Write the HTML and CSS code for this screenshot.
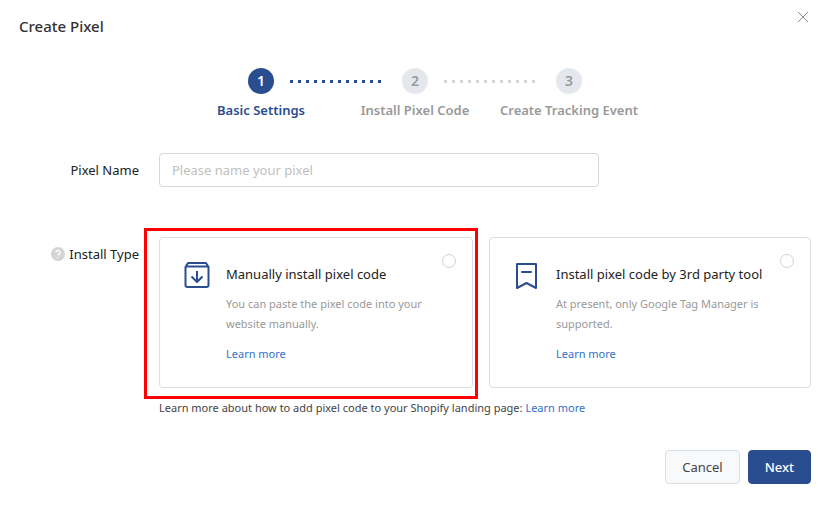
FILE: index.html
```html
<!DOCTYPE html>
<html lang="en">
<head>
<meta charset="utf-8">
<title>Create Pixel</title>
<link rel="stylesheet" href="styles.css">
</head>
<body>
<main class="dialog">
  <header class="header">
    <h1 class="title">Create Pixel</h1>
    <button class="close" type="button" aria-label="Close">
      <svg width="12" height="12" viewBox="0 0 12 12" fill="none" stroke="currentColor"><path d="M1 1l10 10M11 1L1 11"/></svg>
    </button>
  </header>

  <ol class="steps">
    <li class="step active">
      <div class="marker"><span class="dots hidden"></span><span class="number">1</span><span class="dots"></span></div>
      <span class="step-name">Basic Settings</span>
    </li>
    <li class="step">
      <div class="marker"><span class="dots done"></span><span class="number">2</span><span class="dots"></span></div>
      <span class="step-name">Install Pixel Code</span>
    </li>
    <li class="step">
      <div class="marker"><span class="dots"></span><span class="number">3</span><span class="dots hidden"></span></div>
      <span class="step-name">Create Tracking Event</span>
    </li>
  </ol>

  <form class="form">
    <div class="row">
      <label class="label" for="pixel-name">Pixel Name</label>
      <input class="input" id="pixel-name" type="text" placeholder="Please name your pixel">
    </div>

    <div class="row" role="radiogroup" aria-labelledby="install-type">
      <div class="label">
        <svg class="help" width="14" height="14" viewBox="0 0 14 14"><circle cx="7" cy="7" r="7" fill="#d4d4d4"/><path d="M5 5.500a2 2 0 1 1 3 1.600q-1 .5-1 1.400M7 9.700v1.300" fill="none" stroke="#fff" stroke-width="1.300"/></svg>
        <span id="install-type">Install Type</span>
      </div>
      <div class="field">
        <div class="cards">
          <div class="card highlighted">
            <svg class="icon" width="26" height="28" viewBox="0 0 26 28" fill="none" stroke="#2a4d8f" stroke-width="2" stroke-linejoin="round"><path d="M1.500 6L4 2h18l2.500 4v18a2 2 0 0 1-2 2h-19a2 2 0 0 1-2-2zM2 5.500h22M13 10v10.500M7.500 15.500l5.500 5.500 5.500-5.500"/></svg>
            <div class="card-body">
              <label class="card-title" for="manual">Manually install pixel code</label>
              <p class="card-text">You can paste the pixel code into your website manually.</p>
              <a class="link" href="#">Learn more</a>
            </div>
            <input class="radio" id="manual" type="radio" name="install">
          </div>
          <div class="card wide">
            <svg class="icon" width="26" height="28" viewBox="0 0 26 28" fill="none" stroke="#2a4d8f" stroke-width="2" stroke-linejoin="round" stroke-linecap="round"><path d="M3 3h19v24l-9.500-5L3 27zM8 11h9"/></svg>
            <div class="card-body">
              <label class="card-title" for="tool">Install pixel code by 3rd party tool</label>
              <p class="card-text">At present, only Google Tag Manager is supported.</p>
              <a class="link" href="#">Learn more</a>
            </div>
            <input class="radio" id="tool" type="radio" name="install">
          </div>
        </div>
        <p class="note">Learn more about how to add pixel code to your Shopify landing page: <a class="link" href="#">Learn more</a></p>
      </div>
    </div>

    <footer class="footer">
      <button class="button" type="button">Cancel</button>
      <button class="button primary" type="submit">Next</button>
    </footer>
  </form>
</main>
</body>
</html>
```
FILE: styles.css
```css
* {
  box-sizing: border-box;
}

body {
  margin: 0;
  background: #fff;
  color: #222;
  font: 13px/20px "Noto Sans", "Open Sans", sans-serif;
}

h1, p, ol {
  margin: 0;
  padding: 0;
}

.dialog {
  padding: 8px 16px 20px 19px;
}

.header {
  display: flex;
  justify-content: space-between;
  height: 60px;
}

.title {
  margin-top: 8px;
  color: #333;
  font-size: 15px;
  font-weight: 500;
  line-height: 20px;
}

.close {
  display: flex;
  align-items: center;
  justify-content: center;
  width: 18px;
  height: 18px;
  padding: 0;
  border: 0;
  background: none;
  color: #888;
}

.steps,
.form {
  margin-right: 1px;
}

.steps {
  display: flex;
  justify-content: center;
  list-style: none;
}

.step {
  width: 154px;
  color: #999;
  font-weight: 600;
  text-align: center;
}

.marker {
  display: flex;
  align-items: center;
  justify-content: center;
  gap: 16px;
  margin-bottom: 6px;
}

.number {
  flex: none;
  width: 26px;
  height: 26px;
  border-radius: 50%;
  background: #e4e8ec;
  font-size: 14px;
  line-height: 26px;
}

.dots {
  flex: none;
  width: 48px;
  height: 3px;
  background: repeating-linear-gradient(to right, #d4d4d4 0 3px, transparent 3px 8px);
}

.active .dots,
.dots.done {
  background: repeating-linear-gradient(to right, #2a4d8f 0 3px, transparent 3px 8px);
}

.dots.hidden {
  visibility: hidden;
}

.step-name {
  display: block;
  white-space: nowrap;
}

.active {
  color: #2a4d8f;
}

.active .number {
  background: #2a4d8f;
  color: #fff;
}

.form {
  display: flex;
  flex-direction: column;
  margin-top: 33px;
}

.row {
  display: grid;
  grid-template-columns: 120px 1fr;
  column-gap: 20px;
  margin-bottom: 50px;
}

.row:last-of-type {
  margin-bottom: 32px;
}

.label {
  display: flex;
  align-items: center;
  justify-content: flex-end;
  gap: 4px;
  height: 34px;
}

.input {
  width: 100%;
  max-width: 440px;
  height: 34px;
  padding: 0 12px;
  border: 1px solid #d3d7de;
  border-radius: 4px;
  font: inherit;
}

.input::placeholder {
  color: #bfbfbf;
}

.cards {
  display: grid;
  grid-template-columns: 314fr 322fr;
  gap: 16px;
}

.card {
  position: relative;
  display: flex;
  gap: 16px;
  padding: 23px 32px 23px 24px;
  border: 1px solid #d9dee3;
  border-radius: 4px;
}

.card.wide {
  padding-right: 16px;
}

.highlighted::after {
  content: "";
  position: absolute;
  inset: -10px -6px -12px -16px;
  border: 3px solid #f00;
  pointer-events: none;
}

.icon {
  flex: none;
}

.card-body {
  display: flex;
  flex: 1;
  flex-direction: column;
  align-items: flex-start;
  padding-top: 3px;
}

.card-title {
  margin-bottom: 10px;
  white-space: nowrap;
}

.card-text,
.link,
.note {
  font-size: 11px;
}

.card-text {
  max-width: 216px;
  margin-bottom: 10px;
  color: #999;
}

.link {
  color: #3370c9;
  text-decoration: none;
}

.radio {
  position: absolute;
  top: 16px;
  right: 16px;
  width: 14px;
  height: 14px;
  margin: 0;
  border: 1px solid #ccd2da;
  border-radius: 50%;
  appearance: none;
  background: #fff;
}

.note {
  margin-top: 10px;
  color: #444;
}

.footer {
  display: flex;
  justify-content: flex-end;
  gap: 8px;
}

.button {
  height: 34px;
  padding: 0 16px;
  border: 1px solid #d9dee3;
  border-radius: 4px;
  background: #f8f9fb;
  color: #444;
  font: inherit;
}

.primary {
  border-color: #2a4d8f;
  background: #2a4d8f;
  color: #fff;
  font-weight: 500;
}
```
